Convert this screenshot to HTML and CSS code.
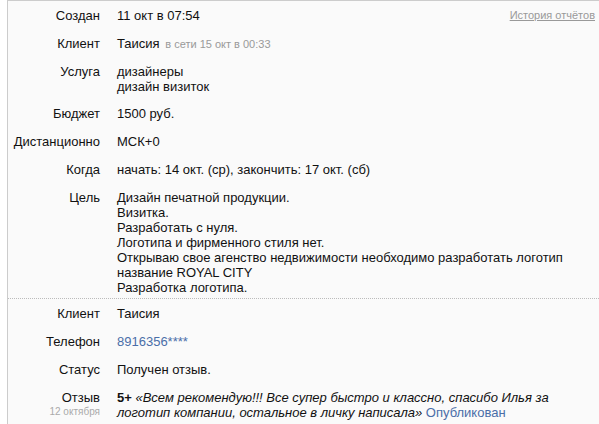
FILE: index.html
```html
<!DOCTYPE html>
<html lang="ru">
<head>
    <meta charset="UTF-8">
    <title>Заказ</title>
    <link rel="stylesheet" href="styles.css">
</head>
<body>

    <!-- Order details -->
    <div class="order">
        <div class="section">
            <div class="label">Создан</div>
            <div class="value value-top">
                <span>11 окт в 07:54</span>
                <a class="history" href="#">История отчётов</a>
            </div>

            <div class="label">Клиент</div>
            <div class="value">Таисия <span class="muted">в сети 15 окт в 00:33</span></div>

            <div class="label">Услуга</div>
            <div class="value">дизайнеры<br>дизайн визиток</div>

            <div class="label">Бюджет</div>
            <div class="value">1500 руб.</div>

            <div class="label">Дистанционно</div>
            <div class="value">МСК+0</div>

            <div class="label">Когда</div>
            <div class="value">начать: 14 окт. (ср), закончить: 17 окт. (сб)</div>

            <div class="label">Цель</div>
            <div class="value">Дизайн печатной продукции.<br>Визитка.<br>Разработать с нуля.<br>Логотипа и фирменного стиля нет.<br>Открываю свое агенство недвижимости необходимо разработать логотип название ROYAL CITY<br>Разработка логотипа.</div>
        </div>

        <div class="section section-client">
            <div class="label">Клиент</div>
            <div class="value">Таисия</div>

            <div class="label">Телефон</div>
            <div class="value"><a class="link" href="#">8916356****</a></div>

            <div class="label">Статус</div>
            <div class="value">Получен отзыв.</div>

            <div class="label">Отзыв<div class="date">12 октября</div></div>
            <div class="value"><b>5+</b> <i>«Всем рекомендую!!! Все супер быстро и классно, спасибо Илья за логотип компании, остальное в личку написала»</i> <a class="link" href="#">Опубликован</a></div>
        </div>
    </div>

</body>
</html>
```

FILE: styles.css
```css
body, html {
    margin: 0;
    padding: 0;
    background: #fff;
    font-family: 'Liberation Sans', Arial, sans-serif;
    font-size: 13px;
    line-height: 15px;
    color: #111;
}

/* Order card */
.order {
    margin-left: 7px;
    min-height: 424px;
    background: #fafafa;
    border-left: 1px solid #ccc;
    border-top: 1px solid #ccc;
    box-sizing: border-box;
}

.section {
    display: grid;
    grid-template-columns: 92px 1fr;
    column-gap: 17px;
    row-gap: 12.75px;
    padding: 7px 4px 3px 0;
}

.section-client {
    border-top: 1px dotted #bbb;
    padding-top: 7px;
    row-gap: 13px;
}

.label {
    text-align: right;
}

.value-top {
    display: flex;
    justify-content: space-between;
}

.history {
    color: #999;
    font-size: 11px;
    line-height: 15px;
    text-decoration: underline;
}

.muted {
    color: #999;
    font-size: 11px;
    line-height: 13px;
    margin-left: 2px;
}

.date {
    color: #aaa;
    font-size: 10px;
    line-height: 13px;
}

.link {
    color: #4a6ea8;
    text-decoration: none;
}
```
